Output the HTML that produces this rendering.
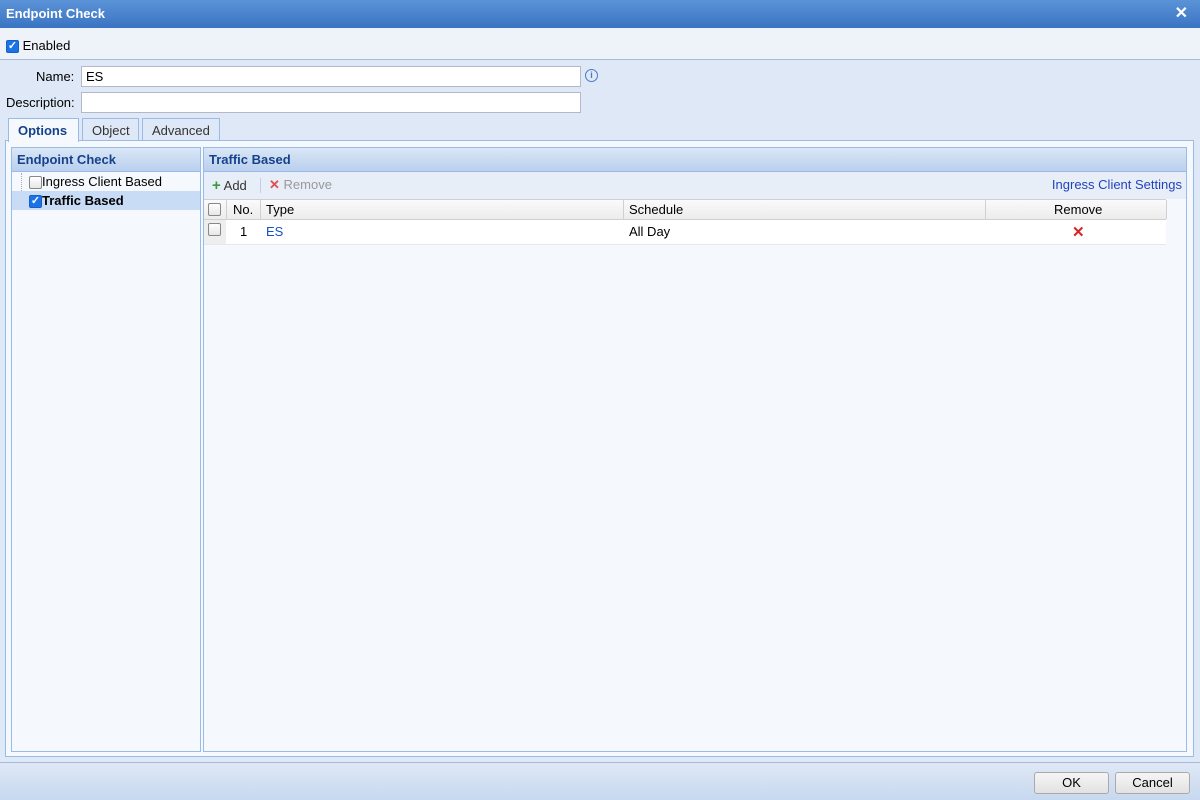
<!DOCTYPE html>
<html><head><style>
*{box-sizing:border-box;margin:0;padding:0}
body{width:1200px;height:800px;background:#dfe8f6;font-family:"Liberation Sans",Tahoma,sans-serif;font-size:12px;color:#000;position:relative;overflow:hidden}
.abs{position:absolute}
.title{left:0;top:0;width:1200px;height:28px;background:linear-gradient(#5b93d8,#3a74c2);color:#fff;font-weight:bold;font-size:13px;padding:6px 6px}
.cb{display:inline-block;width:13px;height:13px;border:1px solid #888;background:linear-gradient(#fff,#e6e6e6);vertical-align:middle;border-radius:2px}
.cbc{background:#1a73e8;border-color:#1a5fc0;color:#fff;font-size:11px;line-height:11px;text-align:center;font-weight:bold}
input{position:absolute;height:21px;border:1px solid #b5b8c8;background:#fff;font-family:inherit;font-size:13px;padding:0 4px}
.tab{position:absolute;top:118px;height:23px;border:1px solid #99bbe8;border-bottom:none;background:#dfe8f6;color:#333;font-size:13px;padding:4px 9px 0}
.hdr{background:linear-gradient(#dae7f6,#b9d0ee);color:#15428b;font-weight:bold;font-size:13px;padding:4px 5px;height:24px;border-bottom:1px solid #99bbe8}
.btn{position:absolute;top:772px;height:22px;width:75px;border:1px solid #aaa;border-radius:3px;background:linear-gradient(#f5f5f5,#e2e2e2);text-align:center;font-size:13px;line-height:20px}
</style></head><body>
<div class="abs title">Endpoint Check<span style="position:absolute;right:12px;top:3px;font-size:16px">✕</span></div>
<div class="abs" style="left:0;top:28px;width:1200px;height:32px;background:#eef3fa;border-bottom:1px solid #a8bcd8"></div>
<div class="abs" style="left:6px;top:38px;font-size:13px"><span class="cb cbc">✓</span> Enabled</div>
<div class="abs" style="left:36px;top:69px;font-size:13px">Name:</div>
<input style="left:81px;top:66px;width:500px" value="ES">
<div class="abs" style="left:585px;top:69px;width:13px;height:13px;border:1px solid #4a7ac0;border-radius:50%;color:#4a7ac0;font-size:9px;text-align:center;line-height:11px;font-weight:bold">i</div>
<div class="abs" style="left:6px;top:95px;font-size:13px">Description:</div>
<input style="left:81px;top:92px;width:500px">
<div class="tab" style="left:8px;width:71px;height:24px;background:#f5f8fc;color:#15428b;font-weight:bold;z-index:2">Options</div>
<div class="tab" style="left:82px;width:57px">Object</div>
<div class="tab" style="left:142px;width:78px">Advanced</div>
<div class="abs" style="left:5px;top:140px;width:1189px;height:617px;border:1px solid #99bbe8;background:#f5f8fc"></div>
<div class="abs" style="left:11px;top:147px;width:190px;height:605px;border:1px solid #99bbe8;background:#f5f8fc">
 <div class="hdr">Endpoint Check</div>
 <div class="abs" style="left:9px;top:25px;height:32px;border-left:1px dotted #aaa"></div>
 <div style="height:19px;padding:2px 0 0 17px;font-size:13px;position:relative"><span class="cb"></span>Ingress Client Based</div>
 <div style="height:19px;padding:2px 0 0 17px;font-size:13px;font-weight:bold;background:#c8dcf5;position:relative"><span class="cb cbc">✓</span>Traffic Based</div>
</div>
<div class="abs" style="left:203px;top:147px;width:984px;height:605px;border:1px solid #99bbe8;background:#f5f8fc">
 <div class="hdr">Traffic Based</div>
 <div style="height:27px;background:#e8eef8;position:relative;font-size:13px">
  <span class="abs" style="left:8px;top:5px;color:#333"><b style="color:#3a9a3a;font-size:15px">+</b> Add</span>
  <span class="abs" style="left:56px;top:6px;width:1px;height:15px;background:#c0d0e8"></span>
  <span class="abs" style="left:65px;top:5px;color:#999"><b style="color:#e05050">✕</b> Remove</span>
  <span class="abs" style="right:4px;top:5px;color:#2244bb">Ingress Client Settings</span>
 </div>
 <div style="position:relative;height:21px;background:linear-gradient(#fafafa,#ececec);border-bottom:1px solid #d0d0d0;border-top:1px solid #d0d0d0;width:962px;font-size:13px">
  <span class="cb abs" style="left:4px;top:3px"></span>
  <span class="abs" style="left:22px;top:0;height:19px;border-left:1px solid #d0d0d0"></span>
  <span class="abs" style="left:29px;top:2px">No.</span>
  <span class="abs" style="left:56px;top:0;height:19px;border-left:1px solid #d0d0d0"></span>
  <span class="abs" style="left:62px;top:2px">Type</span>
  <span class="abs" style="left:419px;top:0;height:19px;border-left:1px solid #d0d0d0"></span>
  <span class="abs" style="left:425px;top:2px">Schedule</span>
  <span class="abs" style="left:781px;top:0;height:19px;border-left:1px solid #d0d0d0"></span>
  <span class="abs" style="left:850px;top:2px">Remove</span>
  <span class="abs" style="left:962px;top:0;height:19px;border-left:1px solid #d0d0d0"></span>
 </div>
 <div style="position:relative;height:25px;background:#fff;border-bottom:1px solid #e4e8ee;width:962px;font-size:13px">
  <span class="abs" style="left:0;top:0;width:22px;height:24px;background:#eee"></span>
  <span class="cb abs" style="left:4px;top:3px"></span>
  <span class="abs" style="left:36px;top:4px">1</span>
  <span class="abs" style="left:62px;top:4px;color:#1a4fc0">ES</span>
  <span class="abs" style="left:425px;top:4px">All Day</span>
  <span class="abs" style="left:868px;top:3px;color:#d22;font-weight:bold;font-size:15px">✕</span>
 </div>
</div>
<div class="abs" style="left:0;top:762px;width:1200px;height:38px;background:linear-gradient(#dfe8f6,#c7d8ef);border-top:1px solid #a8bcd8"></div>
<div class="btn" style="left:1034px">OK</div>
<div class="btn" style="left:1115px">Cancel</div>
</body></html>
